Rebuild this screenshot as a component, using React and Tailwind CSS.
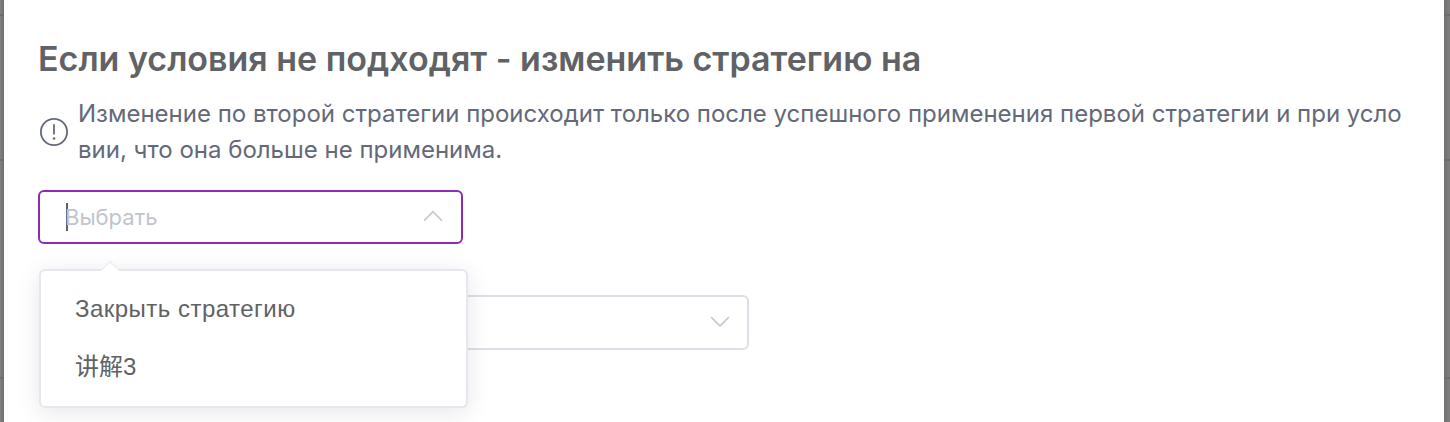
import { useState } from 'react';
import { clsx } from 'clsx';

const options = [
  { id: 1, label: 'Закрыть стратегию', className: 'tracking-[0.48px]' },
  { id: 2, label: '讲解3' },
];

// Dimmed table rows that stay visible on both sides of the dialog
const Backdrop = ({ className }) => (
  <div className={clsx('flex flex-col shrink-0', className)}>
    <div className="h-4 border-b-2 border-[#6c6c6b]" />
    <div className="h-[145px] border-b-2 border-[#6c6c6b]" />
    <div className="h-[218px] border-b-2 border-[#6c6c6b]" />
    <div className="flex-1" />
  </div>
);

const Chevron = ({ up }) => (
  <svg className="mb-[2px]" width="20" height="12" viewBox="0 0 20 12" fill="none" stroke="#c0c4cc" strokeWidth="1.6" strokeLinecap="round" strokeLinejoin="round">
    <path d={up ? 'M1.5 10.2 10 1.7l8.5 8.5' : 'M1.5 1.5 10 10l8.5-8.5'} />
  </svg>
);

const InfoIcon = () => (
  <svg className="shrink-0" width="28" height="28" viewBox="0 0 28 28" fill="none" stroke="#636979">
    <circle cx="14" cy="14" r="13.1" strokeWidth="1.8" />
    <path d="M14 6.2v10.4" strokeWidth="1.8" />
    <circle cx="14" cy="20.5" r="1.3" fill="#636979" stroke="none" />
  </svg>
);

const Menu = ({ items, onSelect }) => (
  <div className="absolute left-px top-[79px] z-10 w-[429px] h-[139px] pt-[9px] bg-white border-2 border-[#e4e7ed] rounded-md shadow-[0_4px_24px_rgba(0,0,0,0.1)]">
    <svg className="absolute left-[59px] -top-[11px]" width="20" height="12" viewBox="0 0 20 12">
      <path d="M0 12 10 1.5 20 12z" fill="#fff" />
      <path d="M1 10.5 10 1.5l9 9" fill="none" stroke="#ebeef5" strokeWidth="1.4" />
    </svg>
    <ul>
      {items.map(item => (
        <li key={item.id} onClick={() => onSelect(item)}
          className={clsx("h-[58px] px-[34px] leading-[58px] text-[24px] text-[#606266] font-['Liberation_Sans','Noto_Sans_CJK_SC',sans-serif] whitespace-nowrap cursor-pointer", item.className)}>
          {item.label}
        </li>
      ))}
    </ul>
  </div>
);

const App = () => {
  const [open, setOpen] = useState(true);
  const [selected, setSelected] = useState(null);

  const handleSelect = (item) => {
    setSelected(item);
    setOpen(false);
  };

  return (
    <div className="flex h-[422px] overflow-hidden bg-white font-['Inter',sans-serif]">
      <Backdrop className="w-1 bg-linear-to-r from-[#828180] to-[#6f6e6d]" />

      <main className="flex-1 min-w-0 pl-[34px] pt-[38px]">
        <h2 className="text-[34px] leading-[42px] font-semibold text-[#606266] whitespace-nowrap">
          Если условия не подходят - изменить стратегию на
        </h2>

        <div className="flex items-center gap-[10px] mt-4 pl-[2px] text-[#636979]">
          <InfoIcon />
          <p className="text-[24px] leading-9 whitespace-nowrap">
            Изменение по второй стратегии происходит только после успешного применения первой стратегии и при усло
            <br />
            вии, что она больше не применима.
          </p>
        </div>

        <div className="relative w-[425px] mt-[22px]">
          <button onClick={() => setOpen(!open)}
            className="flex items-center w-full h-[54px] pl-[26px] pr-[18px] border-2 border-[#8e2bb4] rounded-md bg-white">
            {!selected && <span className="w-[2px] h-7 bg-[#606266]" />}
            <span className="-ml-[3px] text-[22px] text-[#c0c4cc]">
              {selected ? selected.label : 'Выбрать'}
            </span>
            <span className="ml-auto"><Chevron up={open} /></span>
          </button>
          {open && <Menu items={options} onSelect={handleSelect} />}
        </div>

        <button className="flex items-center justify-end w-[425px] h-[55px] ml-[286px] mt-[51px] pr-[17px] border-2 border-[#dcdfe6] rounded-md bg-white">
          <Chevron />
        </button>
      </main>

      <Backdrop className="w-[6px] bg-linear-to-r from-[#707070] to-[#7e7e7e]" />
    </div>
  );
};

export default App;
